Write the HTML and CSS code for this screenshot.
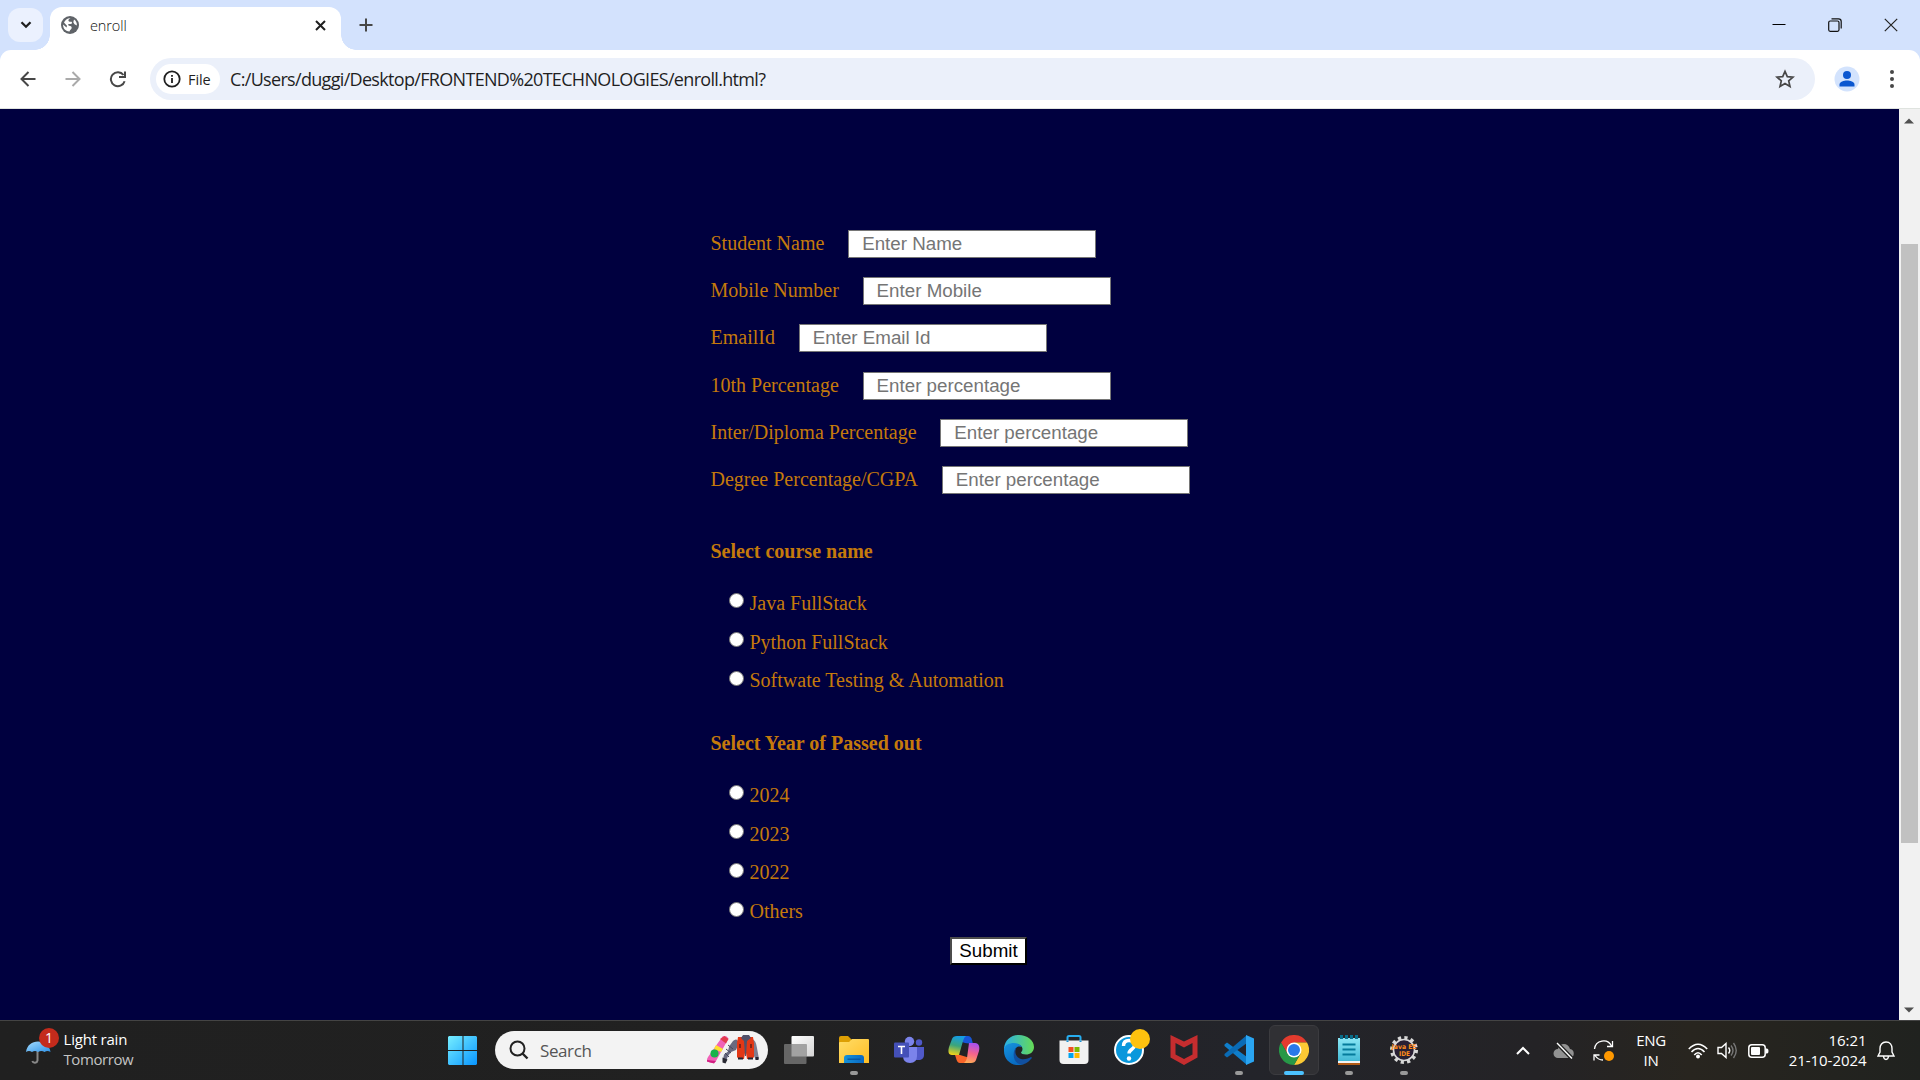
FILE: index.html
```html
<!DOCTYPE html>
<html lang="en">
<head>
<meta charset="utf-8">
<title>enroll</title>
<link rel="stylesheet" href="styles.css">
</head>
<body>
<div class="screen">
  <div class="tabstrip">
    <div class="tabsearch"><svg width="12" height="8" viewBox="0 0 12 8"><path d="M1.5 1.2 6 5.7l4.500-4.500" fill="none" stroke="#1f1f1f" stroke-width="2.300"/></svg></div>
    <div class="tab">
      <svg width="18" height="18" viewBox="0 0 18 18"><circle cx="9" cy="9" r="9" fill="#5f6368"/><path d="M9.500 2.200C7.500 3 6.800 4.500 8 5.500c1.200.8 3-.3 3 1.200 0 1.300-1.500 1.300-3 1.300-1.300 0-1 1.500 0 1.700 1.500.3 2.700.2 2.700 2 0 1.800-1.700 1.500-2.200 3.800C4 15.300 1.900 12 2.100 8.500l3.400 3 .5-1.800L3 6.500C4 4 6.500 2 9.500 2.200zM13 3.500c2 1.300 3 3.300 2.900 6l-2.400-1.300-1.200-2z" fill="#fff"/></svg>
      <span class="tabtitle">enroll</span>
      <svg class="tabclose" width="11" height="11" viewBox="0 0 11 11"><path d="M1 1l9 9M10 1l-9 9" stroke="#1f1f1f" stroke-width="2"/></svg>
    </div>
    <svg class="newtab" width="14" height="14" viewBox="0 0 14 14"><path d="M7 .5v13M.5 7h13" stroke="#474747" stroke-width="2"/></svg>
    <div class="wincontrols">
      <svg width="14" height="14" viewBox="0 0 14 14"><path d="M.5 6.500h13" stroke="#000" stroke-width="1"/></svg>
      <svg width="14" height="14" viewBox="0 0 14 14"><rect x=".7" y="3" width="10.300" height="10.300" rx="1.500" fill="none" stroke="#111" stroke-width="1.200"/><path d="M3.500.8h7a2.700 2.700 0 0 1 2.700 2.700v7" fill="none" stroke="#111" stroke-width="1.200"/></svg>
      <svg width="14" height="14" viewBox="0 0 14 14"><path d="M.8.8l12.400 12.400M13.200.8.800 13.200" stroke="#222" stroke-width="1.200"/></svg>
    </div>
  </div>
  <div class="toolbar">
    <svg width="16" height="16" viewBox="0 0 16 16"><path d="M15.500 8H2M8.500 1 1.500 8l7 7" fill="none" stroke="#474747" stroke-width="2"/></svg>
    <svg width="16" height="16" viewBox="0 0 16 16"><path d="M.5 8H14M7.500 1l7 7-7 7" fill="none" stroke="#aaa" stroke-width="2"/></svg>
    <svg width="18" height="18" viewBox="0 0 18 18"><path d="M15.600 11.200A7 7 0 1 1 14.500 5M16 1.500V7h-6" fill="none" stroke="#474747" stroke-width="2"/></svg>
    <div class="omnibox">
      <div class="chip">
        <svg width="18" height="18" viewBox="0 0 18 18"><circle cx="9" cy="9" r="7.700" fill="none" stroke="#1f1f1f" stroke-width="1.800"/><path d="M9 8v5M9 5v1.800" stroke="#1f1f1f" stroke-width="1.800"/></svg>
        <span>File</span>
      </div>
      <span class="url">C:/Users/duggi/Desktop/FRONTEND%20TECHNOLOGIES/enroll.html?</span>
      <svg class="star" width="20" height="20" viewBox="0 0 20 20"><path d="m10 2.300 2.300 5.300 5.700.5-4.300 3.800 1.300 5.600-5-3-5 3 1.300-5.600L2 8.100l5.700-.5z" fill="none" stroke="#474747" stroke-width="1.700"/></svg>
    </div>
    <svg class="avatar" width="26" height="26" viewBox="0 0 26 26"><circle cx="13" cy="13" r="12.500" fill="#d3e3fd"/><circle cx="13" cy="9" r="4" fill="#0b57d0"/><path d="M5.500 20.500v-2c0-2.800 4.500-4 7.500-4s7.500 1.200 7.500 4v2z" fill="#0b57d0"/></svg>
    <svg class="dots" width="4" height="18" viewBox="0 0 4 18"><g fill="#474747"><circle cx="2" cy="2" r="2"/><circle cx="2" cy="9" r="2"/><circle cx="2" cy="16" r="2"/></g></svg>
  </div>
  <div class="viewport">
    <form class="page">
      <div class="field"><label>Student Name</label><input type="text" placeholder="Enter Name"></div>
      <div class="field"><label>Mobile Number</label><input type="text" placeholder="Enter Mobile"></div>
      <div class="field"><label>EmailId</label><input type="text" placeholder="Enter Email Id"></div>
      <div class="field"><label>10th Percentage</label><input type="text" placeholder="Enter percentage"></div>
      <div class="field"><label>Inter/Diploma Percentage</label><input type="text" placeholder="Enter percentage"></div>
      <div class="field"><label>Degree Percentage/CGPA</label><input type="text" placeholder="Enter percentage"></div>
      <h4 class="first">Select course name</h4>
      <div class="option"><i class="radio"></i><span>Java FullStack</span></div>
      <div class="option"><i class="radio"></i><span>Python FullStack</span></div>
      <div class="option"><i class="radio"></i><span>Softwate Testing &amp; Automation</span></div>
      <h4>Select Year of Passed out</h4>
      <div class="option"><i class="radio"></i><span>2024</span></div>
      <div class="option"><i class="radio"></i><span>2023</span></div>
      <div class="option"><i class="radio"></i><span>2022</span></div>
      <div class="option"><i class="radio"></i><span>Others</span></div>
      <button class="submit" type="button">Submit</button>
    </form>
    <div class="scrollbar">
      <svg width="10" height="6" viewBox="0 0 10 6"><path d="M0 5.500 5 .5l5 5z" fill="#505050"/></svg>
      <div class="thumb"></div>
      <svg width="10" height="6" viewBox="0 0 10 6"><path d="M0 .5l5 5 5-5z" fill="#505050"/></svg>
    </div>
  </div>
  <div class="taskbar">
    <div class="weather">
      <svg width="34" height="38" viewBox="0 0 34 38"><defs><linearGradient id="umb" x2="1" y2="1"><stop stop-color="#a5dcff"/><stop offset="1" stop-color="#2f93e8"/></linearGradient></defs><path d="M12.500 23v9.500a2.700 2.700 0 0 1-5.200.5" fill="none" stroke="#888" stroke-width="2"/><path d="M1 24C2 17 7 13.500 13 13.500S24.500 17 25.500 24q-3-2-6 0-3-2-6.500 0-3-2-6 0-3-2-6 0z" fill="url(#umb)"/><circle cx="24" cy="10" r="10" fill="#c42b1c"/><text x="24" y="15" text-anchor="middle" class="badge">1</text></svg>
      <div class="forecast"><span class="now">Light rain</span><span class="dim">Tomorrow</span></div>
    </div>
    <div class="apps">
      <div class="app start"><svg width="30" height="30" viewBox="0 0 30 30"><defs><linearGradient id="win" gradientUnits="userSpaceOnUse" x1="0" y1="0" x2="29" y2="29"><stop stop-color="#77eeff"/><stop offset="1" stop-color="#0895ff"/></linearGradient></defs><path d="M1 0h13.500v14H0V1zM15.500 0H28l1 1v13H15.500zM0 15h14.500v14H1l-1-1zM15.500 15H29v13l-1 1H15.500z" fill="url(#win)"/></svg></div>
      <div class="search">
        <svg width="20" height="20" viewBox="0 0 20 20"><circle cx="8.500" cy="8.500" r="7" fill="none" stroke="#222" stroke-width="2"/><path d="m13.500 13.500 5 5" stroke="#222" stroke-width="2.400"/></svg>
        <span>Search</span>
        <svg class="gear" width="54" height="30" viewBox="0 0 54 30"><path d="M16.500 1.500Q20 0 22.500 3.500L10 26q-2.500 3.500-9 .5Q.5 24 2 22z" fill="#f062b8"/><path d="m14 4 6 4.500 2.500-4.500-4-3z" fill="#e23b4d"/><path d="m10 10 7 4-2 3-7-3z" fill="#ffe02e"/><circle cx="8.500" cy="18.500" r="4" fill="#17b44b"/><path d="m1 25 9 1-2 2.500-7-2z" fill="#d11f80"/><path d="M27 6q4-4 6 2l-3 7-5 2-3 4-2 5-3-1.500 1-5 4-3 1-5z" fill="#696a80"/><path d="m22 10 5 4m-7 0 5 4m-6 0 4 4" stroke="#45475a"/><path d="m16.500 22.500 5 2-2 4-3-1z" fill="#292932"/><path d="M46 4q4 1 5 9l2 11-3 1-5-10z" fill="#7e7e91"/><path d="M32 2h15l1 6v14q-1 2-3 2h-4l-1-6h-1l-1 6h-4q-2 0-3-2V8z" fill="#e33816"/><path d="M37 0h6l2 3-4 3-1 15h-1L38 6l-3-3z" fill="#50516a"/><path d="M32 22.500h5v2h-5zm10 0h5v2h-5zM49.500 22h3v3h-3z" fill="#242431"/><path d="M34 9v4m11-4v4" stroke="#832315" stroke-width="2"/></svg>
      </div>
      <div class="app"><svg width="30" height="30" viewBox="0 0 30 30"><defs><linearGradient id="tv" x2="1" y2="1"><stop stop-color="#fff"/><stop offset="1" stop-color="#d4d4d4"/></linearGradient></defs><rect x="7.500" y="1" width="22.500" height="20.500" rx="1" fill="url(#tv)"/><rect x="0" y="9" width="22.500" height="20" rx="1" fill="#666"/><path d="M7.500 9h15v12.500h-15z" fill="#a2a2a2"/></svg></div>
      <div class="app running"><svg width="30" height="30" viewBox="0 0 30 30"><defs><linearGradient id="fold" x2="1" y2="1"><stop stop-color="#ffdd68"/><stop offset="1" stop-color="#ffbd24"/></linearGradient><linearGradient id="fold2" x2="1"><stop stop-color="#1792d8"/><stop offset="1" stop-color="#0968c4"/></linearGradient></defs><path d="M0 3q0-2 2-2h7l4 4-2 4H0z" fill="#dd9f04"/><path d="M0 8q0-1 1-1h9l3-3h16q1 0 1 1v23H0z" fill="url(#fold)"/><path d="M5 28v-5q0-3 3-3h14q3 0 3 3v5z" fill="url(#fold2)"/><path d="M8.500 24.200h13" stroke="#06529f" stroke-width="1.200"/></svg></div>
      <div class="app"><svg width="30" height="30" viewBox="0 0 30 30"><circle cx="25" cy="7.500" r="3.200" fill="#5059c9"/><path d="M20 12h10v8q0 4-4 5h-6z" fill="#5059c9"/><circle cx="15.500" cy="6.500" r="4.700" fill="#7b83eb"/><path d="M9 12h14v9q0 7-7 7t-7-7z" fill="#7b83eb"/><rect y="7.500" width="15" height="15" rx="1" fill="#4450b8"/><path d="M4 11.500h7M7.500 11.500V19" stroke="#fff" stroke-width="1.600"/></svg></div>
      <div class="app"><svg width="32" height="30" viewBox="0 0 32 30"><defs><linearGradient id="co1" x1=".5" x2=".3" y2="1"><stop stop-color="#149de6"/><stop offset=".5" stop-color="#3ca57b"/><stop offset="1" stop-color="#f2d419"/></linearGradient><linearGradient id="co2" x1=".5" x2=".3" y2="1"><stop stop-color="#a851ef"/><stop offset=".5" stop-color="#f5638d"/><stop offset="1" stop-color="#ffac54"/></linearGradient></defs><path d="M10 1h10q3 0 4 4l1 4-8-1-9-3z" fill="#1756d7"/><path d="M9 1h9q-2 1-3 5l-4 14H4c-4 0-4-4-3-8L4 4q1-3 5-3z" fill="url(#co1)"/><path d="M7 20h5l10 3q-2 5-5 5h-5q-3 0-4-5z" fill="#f8652a"/><path d="M21 8h6c4 0 5 4 4 8l-3 9q-1 3-5 3h-7q2-1 3-5z" fill="url(#co2)"/></svg></div>
      <div class="app"><svg width="30" height="30" viewBox="0 0 30 30"><defs><linearGradient id="ed1" x2="1"><stop stop-color="#29afe9"/><stop offset="1" stop-color="#66db55"/></linearGradient><linearGradient id="ed2" x2=".5" y2="1"><stop stop-color="#1694df"/><stop offset="1" stop-color="#086ac1"/></linearGradient></defs><path d="M0 13C1 5 7 0 15 0s15 5 15 12c0 5-4 7.500-8 7.500-3 0-5-1-5-2 0-.7 1.500-1 1.500-3.500 0-3-3-5-7-5C6 9 1 12 0 15z" fill="url(#ed1)"/><path d="M0 14c1-4 5-6 10-6 4 0 7 2 8 4-2-1-6-1-7 3-1 6 3 13 9 14C10 33 0 26 0 16z" fill="url(#ed2)"/><path d="M13 12c-3 4-2 10 4 12 4 1 8-1 10-2 1 0 1 1 0 2-3 4-7 5.500-10 5.500C8 28 8 15 13 12z" fill="#1150a0"/></svg></div>
      <div class="app"><svg width="30" height="30" viewBox="0 0 30 30"><path d="M8.500 8V2.500Q8.500 1 10 1h10q1.500 0 1.500 1.500V8" fill="none" stroke="#27adf0" stroke-width="2"/><path d="M.5 5.500h29V25q0 4-4 4h-21q-4 0-4-4z" fill="#f1f1f1"/><path d="M8.500 5.500V7M21.500 5.500V7" stroke="#1b8fd0" stroke-width="2"/><path d="M9.500 12h5v5h-5z" fill="#f25022"/><path d="M15.500 12h5v5h-5z" fill="#7fba00"/><path d="M9.500 18h5v5h-5z" fill="#00a4ef"/><path d="M15.500 18h5v5h-5z" fill="#ffb900"/></svg></div>
      <div class="app help"><svg width="36" height="36" viewBox="0 0 36 36"><circle cx="15" cy="21" r="14" fill="#0a98dc" stroke="#fff" stroke-width="2"/><path d="M9.500 17q0-5.500 5.500-5.500t5.500 5c0 4-5.500 3.500-5.500 8" fill="none" stroke="#fff" stroke-width="3.400"/><circle cx="15" cy="29.500" r="2.200" fill="#fff"/><circle cx="26" cy="10" r="10" fill="#ffc20e"/></svg></div>
      <div class="app"><svg width="28" height="30" viewBox="0 0 28 30"><path d="m.5 0 13.500 6.500L27.500 0v22.500L14 30 .5 22.500zM5.500 8v11.500L14 24l8.500-4.500V8L14 12.500z" fill="#c52d2f" fill-rule="evenodd"/></svg></div>
      <div class="app running"><svg width="30" height="30" viewBox="0 0 30 30"><path d="M.5 9.500 3 7.500 23 22v8L.5 11z" fill="#0f7ecb"/><path d="M.5 20.500 3 22.500 23 8V0L.5 19z" fill="#0a6bb5"/><path d="m22 0 8 3.500v23L22 30z" fill="#2aa5f2"/></svg></div>
      <div class="app active"><svg width="30" height="30" viewBox="0 0 30 30"><path d="M2 7.500A15 15 0 0 1 28 7.500H15L8.500 18.700z" fill="#e33b2e"/><path d="M28 7.500A15 15 0 0 1 15 30l6.500-11.300L15 7.500z" fill="#fcc934"/><path d="M2 7.500A15 15 0 0 0 15 30l6.500-11.300h-13z" fill="#279847"/><circle cx="15" cy="15" r="7.500" fill="#fff"/><circle cx="15" cy="15" r="6" fill="#2979ea"/></svg></div>
      <div class="app running"><svg width="24" height="30" viewBox="0 0 24 30"><defs><linearGradient id="np" x2="0" y2="1"><stop stop-color="#8ae6f5"/><stop offset="1" stop-color="#43bad6"/></linearGradient></defs><path d="M1 25h22v5H1z" fill="#b25b16"/><path d="M1 24h22v4H1z" fill="#f4f4f4"/><path d="M1 3h22v23H1z" fill="url(#np)"/><path d="M5.500 9.500h13M5.500 14.500h13M5.500 19.500h13" stroke="#057b9b" stroke-width="2"/><path d="M4.500 0v4M9.500 0v4M14.500 0v4M19.500 0v4" stroke="#086d8a" stroke-width="3"/></svg></div>
      <div class="app running"><svg width="30" height="30" viewBox="0 0 30 30"><circle cx="15" cy="15" r="12" fill="none" stroke="#d8d8d8" stroke-width="4" stroke-dasharray="3.140 3.140"/><circle cx="15" cy="15" r="10.500" fill="#282034" stroke="#d8d8d8" stroke-width="1.600"/><text x="15" y="14" text-anchor="middle" class="eeicon" textLength="25" lengthAdjust="spacingAndGlyphs">Java EE</text><text x="15.500" y="20.500" text-anchor="middle" class="eeicon" textLength="11" lengthAdjust="spacingAndGlyphs">IDE</text></svg></div>
    </div>
    <div class="tray">
      <svg class="chev" width="14" height="9" viewBox="0 0 14 9"><path d="m1 8 6-6 6 6" fill="none" stroke="#fff" stroke-width="2"/></svg>
      <svg class="cloud" width="22" height="18" viewBox="0 0 22 18"><path d="M5 16a4.500 4.500 0 0 1 0-9C6 1 15 0 17 7c5 0 5 9 0 9z" fill="#929292"/><path d="m4 1 15 15.500" stroke="#242424" stroke-width="4"/><path d="m4 1 15 15.500" stroke="#fff" stroke-width="1.400"/></svg>
      <svg class="sync" width="22" height="22" viewBox="0 0 22 22"><path d="M1.500 9a9 9 0 0 1 17-3M19.500 1v5.500H14M1 20.500V15h5.500M2 15.500Q5 20 10 20" fill="none" stroke="#fff" stroke-width="1.300"/><circle cx="16" cy="16" r="5" fill="#ff9800"/></svg>
      <div class="lang"><span>ENG</span><span>IN</span></div>
      <svg class="wifi" width="20" height="16" viewBox="0 0 20 16"><g fill="none" stroke="#fff" stroke-width="1.600"><path d="M.8 6Q10-3.500 19.200 6"/><path d="M3.500 9Q10 2 16.500 9"/><path d="M6.300 12Q10 7.500 13.700 12"/></g><circle cx="10" cy="13.500" r="2" fill="#fff"/></svg>
      <svg class="volume" width="21" height="17" viewBox="0 0 21 17"><path d="M1 5.500h3.500L9 1.500v14L4.500 11.500H1z" fill="none" stroke="#fff" stroke-width="1.400"/><path d="M11.500 5.500q2.500 3 0 6" fill="none" stroke="#fff" stroke-width="1.400"/><path d="M14 3.500q4 5 0 10M16.500 1q5.500 7.500 0 15" fill="none" stroke="#777" stroke-width="1.400"/></svg>
      <svg class="battery" width="21" height="14" viewBox="0 0 21 14"><rect x=".8" y=".8" width="16.400" height="12.400" rx="3" fill="none" stroke="#fff" stroke-width="1.500"/><rect x="3" y="3" width="9" height="8" rx="1" fill="#fff"/><path d="M18 4.500h1q1.500 0 1.500 2.500T19 9.500h-1z" fill="#fff"/></svg>
      <div class="clock"><span class="time">16:21</span><span>21-10-2024</span></div>
      <svg class="bell" width="18" height="20" viewBox="0 0 18 20"><path d="M9 1C5 1 3 4 3 7.500V11l-2 4h16l-2-4V7.500C15 4 13 1 9 1zM6.500 15.500q.5 3 2.500 3t2.500-3" fill="none" stroke="#fff" stroke-width="1.400"/></svg>
    </div>
  </div>
</div>
</body>
</html>
```
FILE: styles.css
```css
* { box-sizing: border-box; }
body { margin: 0; overflow: hidden; }
svg { display: block; flex: none; }
.screen {
  width: 1920px; height: 1080px;
  display: flex; flex-direction: column;
  background: #d3e2fd;
  font-family: "Open Sans", sans-serif;
  white-space: nowrap;
}

/* browser tabs */
.tabstrip { height: 50px; display: flex; align-items: flex-end; padding-left: 8px; }
.tabsearch { width: 35px; height: 34px; margin-bottom: 8px; border-radius: 12px; background: #ebf1fe; display: flex; align-items: center; justify-content: center; }
.tab {
  position: relative;
  width: 291px; height: 43px; margin-left: 7px; padding: 0 15px 7px 11px;
  background: #fff; border-radius: 12px 12px 0 0;
  display: flex; align-items: center;
}
.tab::before, .tab::after { content: ""; position: absolute; bottom: 0; width: 15px; height: 15px; }
.tab::before { left: -15px; background: radial-gradient(circle at 0 0, transparent 14.5px, #fff 15px); }
.tab::after { right: -15px; background: radial-gradient(circle at 100% 0, transparent 14.5px, #fff 15px); }
.tabtitle { margin-left: 11px; font-size: 14.500px; font-weight: 300; letter-spacing: -0.1px; color: #111; }
.tabclose { margin-left: auto; }
.newtab { margin: 0 0 18px 18px; }
.wincontrols { margin: 0 22px 18px auto; display: flex; gap: 42px; }

/* address row */
.toolbar {
  height: 59px; background: #fff; border-bottom: 1px solid #dfe3df;
  border-radius: 11px 11px 0 0;
  display: flex; align-items: center; padding-left: 20px;
}
.toolbar > svg { margin-right: 29px; }
.toolbar > svg:nth-child(2) { margin-right: 28px; }
.toolbar > svg:nth-child(3) { margin-right: 23px; }
.omnibox { width: 1665px; height: 42px; border-radius: 21px; background: #ebf0fa; display: flex; align-items: center; padding-left: 6px; }
.chip { width: 64px; height: 30px; border-radius: 15px; background: #fff; display: flex; align-items: center; padding-left: 7px; font-size: 14.500px; color: #1f1f1f; }
.chip span { margin-left: 7px; letter-spacing: -0.1px; }
.url { margin-left: 10px; font-size: 18px; letter-spacing: -0.68px; color: #1f1f1f; }
.star { margin-left: auto; margin-right: 20px; }
.toolbar .avatar { margin: 0 30px 0 19px; }
.toolbar .dots { margin: 0; }

/* document */
.viewport { height: 911px; display: flex; background: #00003f; }
.page { flex: 1; padding: 111.200px 0 0 710.500px; font-family: "Liberation Serif", serif; font-size: 20px; color: #c57a0b; }
.field { height: 47.250px; display: flex; align-items: center; }
.field label { padding-bottom: 1px; }
.field input {
  width: 248px; height: 28px; margin-left: 23.800px; padding: 0 0 0 13px;
  border: 1px solid #767676; border-radius: 0; background: #fff;
  font: 18.750px "Liberation Sans", sans-serif;
}
.field input::placeholder { color: #757575; opacity: 1; }
h4 { height: 24px; line-height: 24px; margin: 31.200px 0 20.600px; font-size: 20px; }
h4.first { margin-top: 35.700px; }
.option { height: 38.750px; display: flex; align-items: center; padding-left: 18.500px; }
.radio { width: 15px; height: 15px; margin: 0 5.500px 5px 0; border: 1px solid #767676; border-radius: 50%; background: #fff; }
.submit {
  display: block; width: 77px; height: 28px; margin: 6px 0 0 239.500px; padding: 0;
  border: 2px outset #000; border-color: #4c4c4c #000 #000 #4c4c4c; border-radius: 0; background: #fff; color: #000;
  font: 18.750px "Liberation Sans", sans-serif;
}
.scrollbar { width: 21px; background: #f1f1f1; display: flex; flex-direction: column; align-items: center; padding: 9px 0 7px; }
.thumb { width: 17px; height: 599px; margin-top: 120px; margin-left: -1px; flex: none; background: #c1c1c1; }
.scrollbar svg { margin-left: -1px; }
.scrollbar svg:last-child { margin-top: auto; }

/* taskbar */
.taskbar { height: 60px; border-top: 1px solid #444; background: linear-gradient(90deg, #202020 0%, #212121 40%, #23242a 65%, #242326 80%, #28251f 88%, #20221f 100%); display: flex; color: #fff; font-size: 15px; line-height: 20px; }
.weather { width: 434.500px; display: flex; padding: 7px 0 0 25px; }
.forecast { display: flex; flex-direction: column; margin: 1px 0 0 4.500px; letter-spacing: -0.42px; }
.now { letter-spacing: -0.2px; }
.dim { color: #c4c4c4; }
.badge { font: 14px "Open Sans", sans-serif; fill: #fff; }
.apps { display: flex; width: 998px; padding-top: 4px; }
.app { position: relative; width: 55px; height: 50px; display: flex; align-items: center; justify-content: center; }
.app.running::after, .app.active::after { content: ""; position: absolute; bottom: 0; width: 8px; height: 4px; border-radius: 2px; background: #999; }
.app.active::before { content: ""; position: absolute; inset: 0 2.500px; border: 1px solid #3b3b3f; border-radius: 6px; background: #303034; }
.app.active::after { width: 20px; background: #4cc2ff; }
.app svg { position: relative; }
.start svg { margin: 2px 0 0 2px; }
.help svg { margin: -6px -6px 0 0; }
.eeicon { font: bold 6.500px "DejaVu Sans", sans-serif; fill: #ff8c1a; }
.search { width: 273px; height: 38px; margin: 6px 3.500px 0 5.500px; border-radius: 19px; background: #f3f3f3; display: flex; align-items: center; padding: 0 8px 0 14px; color: #555; font-size: 17px; }
.search span { margin: 1px 0 0 11px; letter-spacing: -0.4px; }
.gear { margin-left: auto; }
.tray { flex: 1; display: flex; align-items: center; padding-left: 83.500px; }
.cloud { margin-left: 22.500px; }
.sync { margin-left: 18px; }
.lang, .clock { display: flex; flex-direction: column; align-items: center; padding-bottom: 2px; }
.lang { width: 30px; margin-left: 21.500px; letter-spacing: -0.3px; }
.wifi { margin-left: 21.500px; }
.volume { margin-left: 9.500px; }
.battery { margin-left: 9.500px; }
.clock { align-items: flex-end; width: 78px; margin-left: 20px; letter-spacing: -0.05px; }
.bell { margin-left: 10.500px; }
```
